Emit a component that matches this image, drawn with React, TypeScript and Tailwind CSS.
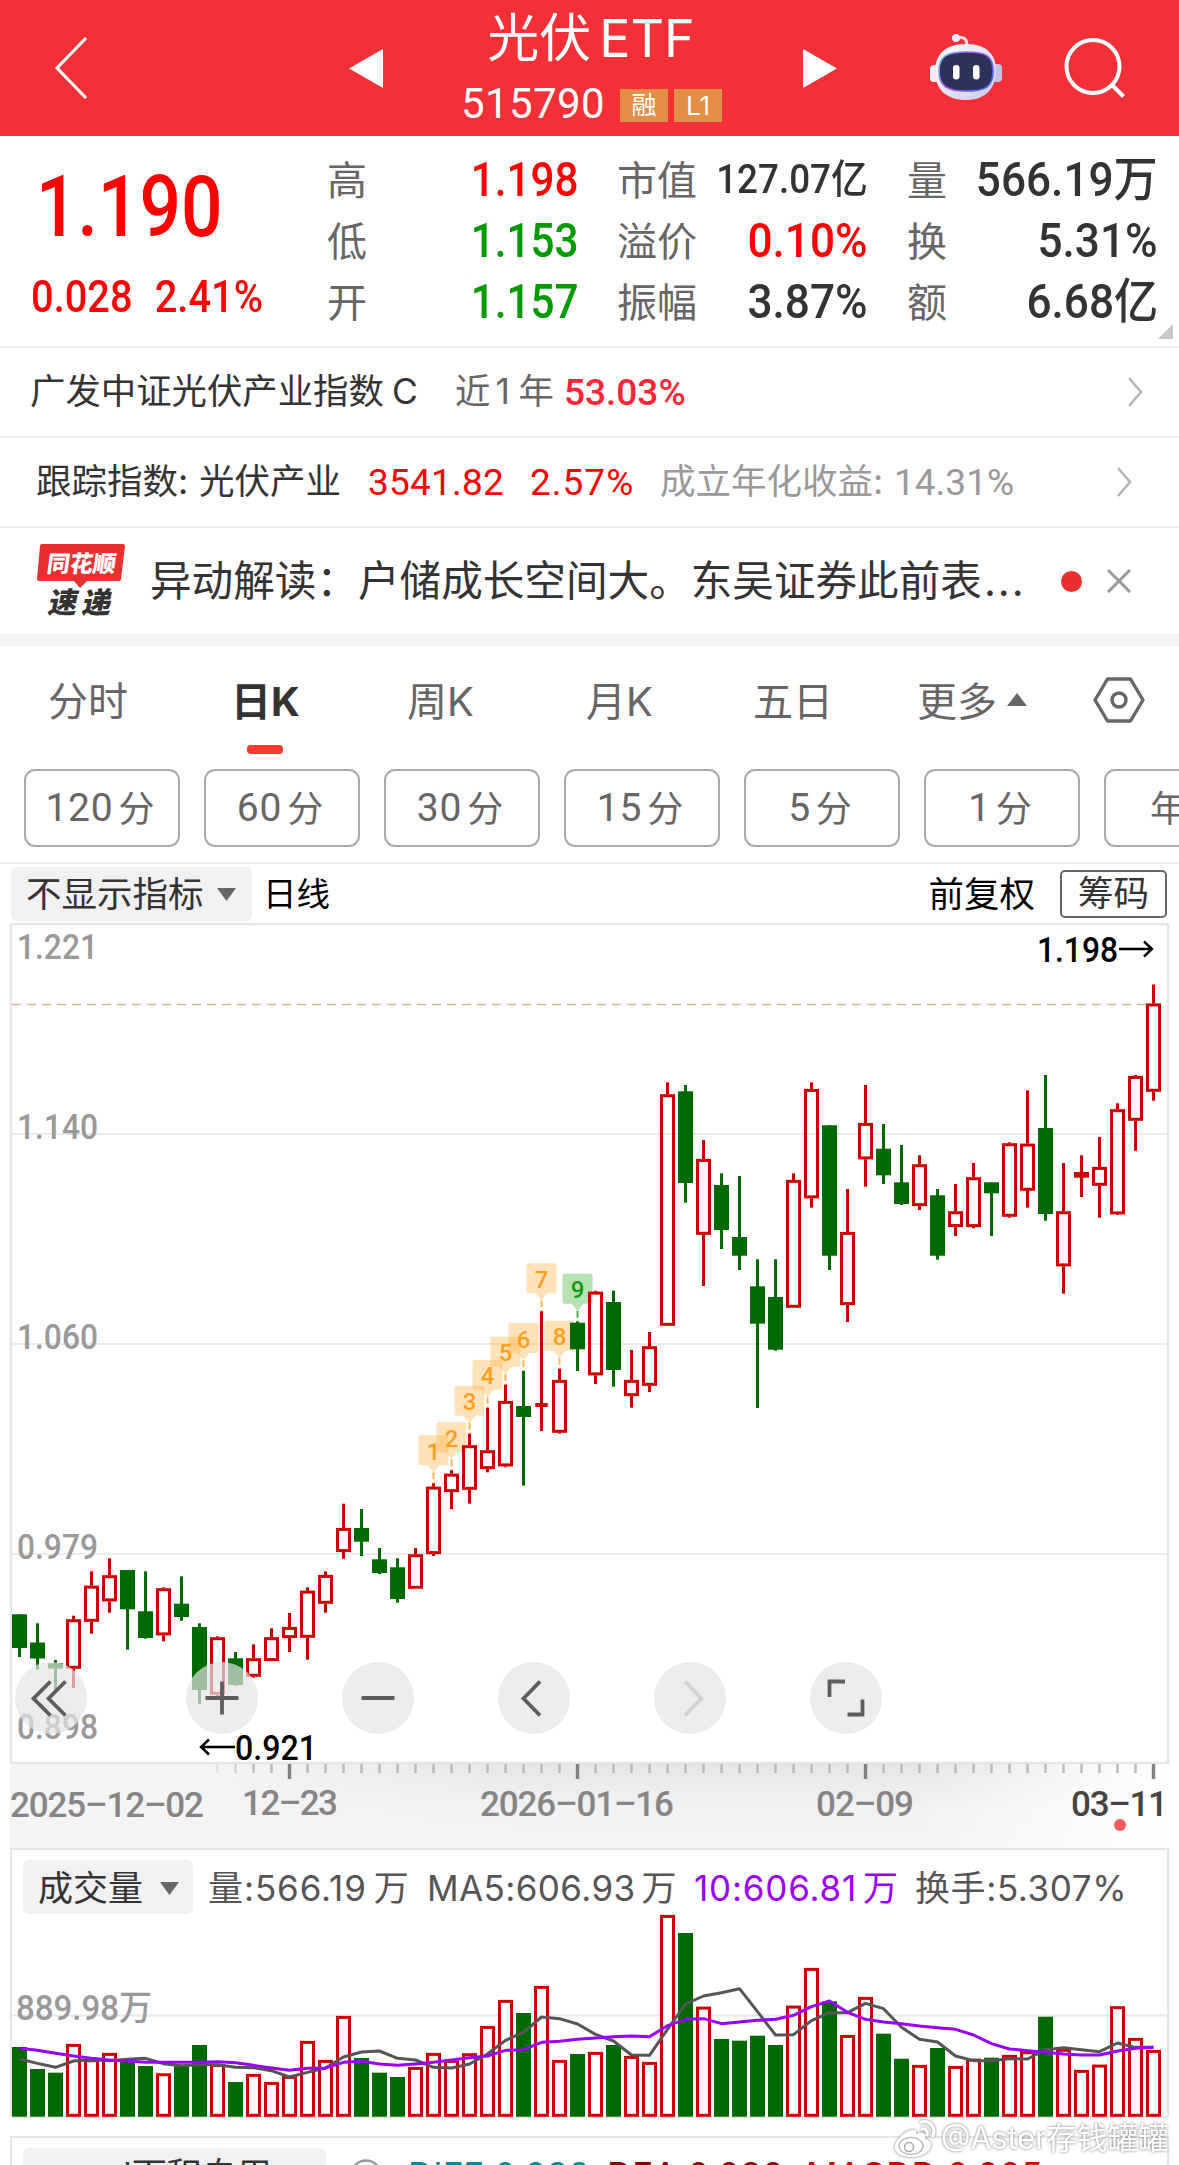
import React from 'react';

type Candle = [dir: 'r' | 'g', high: number, top: number, bottom: number, low: number];

// y values are in the drawing space of the price chart
const candles: Candle[] = [
  ['g', 1614.3, 1614.3, 1648, 1657],
  ['g', 1623.3, 1642.5, 1658.5, 1669.7],
  ['g', 1660, 1663.3, 1668.7, 1692],
  ['r', 1615.7, 1619.3, 1668.7, 1688],
  ['r', 1571.3, 1585.7, 1621.7, 1633.7],
  ['r', 1558.3, 1575.3, 1601.3, 1612.7],
  ['g', 1570, 1570, 1609.3, 1649.7],
  ['g', 1571.3, 1611.3, 1638, 1638.7],
  ['r', 1587.3, 1588.3, 1635.3, 1641.3],
  ['g', 1576.3, 1603.7, 1617, 1620.7],
  ['g', 1623.3, 1627, 1690, 1703.7],
  ['r', 1636.3, 1637.3, 1694.7, 1698.7],
  ['g', 1652, 1658.3, 1685, 1685.7],
  ['r', 1644.3, 1658.3, 1676.7, 1677.7],
  ['r', 1628.3, 1637.3, 1661, 1661],
  ['r', 1613, 1627, 1638, 1652],
  ['r', 1587.3, 1590.7, 1637.7, 1659.7],
  ['r', 1571.3, 1575, 1603.7, 1612.7],
  ['r', 1503.7, 1528, 1552, 1558.7],
  ['g', 1509, 1528, 1541.7, 1556],
  ['g', 1548, 1559.3, 1573, 1574],
  ['g', 1558.3, 1567.3, 1599, 1602.7],
  ['r', 1548, 1554.3, 1588.7, 1588.7],
  ['r', 1483.3, 1486.7, 1554, 1556],
  ['r', 1470.3, 1473.7, 1492, 1509],
  ['r', 1433.7, 1445.3, 1489.7, 1503.7],
  ['r', 1407.7, 1450.3, 1469, 1472.3],
  ['r', 1384.7, 1401, 1466.3, 1467.3],
  ['g', 1371, 1406, 1417, 1485.7],
  ['r', 1311.3, 1403, 1407, 1431],
  ['r', 1368.7, 1380, 1432.7, 1433.7],
  ['g', 1321.7, 1322.7, 1349.3, 1371],
  ['r', 1290.7, 1291.7, 1375.3, 1384],
  ['g', 1290.7, 1302, 1370, 1386.7],
  ['r', 1350, 1380, 1396, 1407.7],
  ['r', 1332, 1346.3, 1385.7, 1392],
  ['r', 1082.3, 1094.3, 1325.7, 1325.7],
  ['g', 1085, 1091.3, 1183, 1202.7],
  ['r', 1140, 1159, 1234.7, 1286],
  ['g', 1173.3, 1185, 1230, 1249],
  ['g', 1176, 1237, 1255.7, 1270],
  ['g', 1259.3, 1286.3, 1323.7, 1408],
  ['g', 1259.3, 1297, 1349.7, 1350.7],
  ['r', 1173.3, 1180, 1307.7, 1307.7],
  ['r', 1082.3, 1089, 1198.3, 1207.7],
  ['g', 1125.3, 1125.3, 1255.7, 1270],
  ['r', 1189, 1232, 1305, 1322],
  ['r', 1085, 1123, 1159.3, 1186.7],
  ['g', 1124, 1148.7, 1175.3, 1184],
  ['g', 1145, 1182.3, 1204, 1205],
  ['r', 1155.3, 1164.3, 1206, 1210],
  ['g', 1189, 1195.3, 1255.7, 1259.7],
  ['r', 1184, 1211.3, 1227, 1236],
  ['r', 1163, 1177.3, 1227, 1228.3],
  ['g', 1182.3, 1182.3, 1193.3, 1236],
  ['r', 1142.3, 1143.3, 1216.7, 1217.7],
  ['r', 1090.3, 1143.7, 1190.7, 1207.7],
  ['g', 1075, 1128, 1214, 1220.7],
  ['r', 1163, 1211.3, 1266.3, 1293.7],
  ['r', 1155.3, 1172, 1177.7, 1197],
  ['r', 1137, 1167, 1185.7, 1217.7],
  ['r', 1103.3, 1109.3, 1214.3, 1215],
  ['r', 1075, 1076, 1120.7, 1150.7],
  ['r', 984.5, 1003.5, 1091.7, 1100.7],
];

const volumeTops = [
  2047, 2069, 2072.7, 2044, 2059.3, 2053, 2060, 2066, 2073.3, 2066, 2045, 2064, 2082, 2074, 2082, 2076,
  2041, 2060, 2016, 2058, 2072.7, 2077, 2067, 2053, 2060, 2053.3, 2026, 2000, 2013, 1986, 2060, 2054,
  2052, 2045, 2056, 2062, 1915, 1933, 2006.7, 2039, 2040.7, 2035.7, 2045, 2005.7, 1968, 2001.3, 2035, 1997,
  2033.7, 2058.7, 2065, 2048, 2066, 2058.7, 2057.7, 2055, 2051.3, 2016.7, 2049, 2070, 2064.7, 2006.3, 2038, 2050,
];

// moving averages, in thirds of a pixel below the panel top
const ma5 = [
  657, 670, 682, 663, 659, 662, 658, 655, 671, 677, 674, 674, 682, 683, 692, 711, 697, 684, 651, 636, 633, 655,
  660, 682, 684, 672, 642, 601, 577, 531, 536, 552, 583, 603, 645, 646, 568, 492, 468, 458, 446, 515, 585, 584,
  542, 518, 518, 490, 506, 562, 598, 606, 648, 662, 662, 656, 657, 629, 623, 629, 635, 609, 622, 622,
];
const ma10 = [
  625, 631, 640, 648, 655, 660, 663, 667, 667, 667, 667, 665, 668, 676, 684, 691, 685, 684, 667, 664, 672, 676,
  672, 667, 660, 653, 648, 631, 629, 607, 604, 598, 594, 590, 588, 590, 557, 538, 536, 551, 546, 541, 538, 526,
  500, 483, 517, 538, 546, 551, 558, 563, 568, 585, 611, 627, 632, 637, 642, 645, 645, 633, 625, 622,
];

const RED = '#cc0000';
const GREEN = '#006a00';
const cx = (i: number) => 19.5 + 18 * i;
const maPoints = (vals: number[]) => vals.map((v, i) => `${cx(i)},${1840 + v / 3}`).join(' ');

const DIN = 'font-[Roboto,"Noto_Sans_CJK_SC",sans-serif]';

function Header() {
  return (
    <header className="flex h-[136px] items-center bg-[#f33038] text-white">
      <svg className="ml-[52px] shrink-0" width="38" height="64" viewBox="0 0 38 64" fill="none" stroke="white" strokeWidth="3.2">
        <path d="M34 2 5 32l29 30" />
      </svg>
      <svg className="ml-[259px] shrink-0" width="34" height="39" viewBox="0 0 34 39"><path d="M34 0v39L0 19.5z" fill="white" /></svg>
      <div className="flex w-[420px] shrink-0 flex-col items-center">
        <h1 className="flex h-[74px] items-center gap-[8px] pt-[3px] pr-[4px] leading-none whitespace-nowrap">
          <span className="text-[52px]">光伏</span>
          <span className="text-[52px]">ETF</span>
        </h1>
        <div className="flex h-[62px] items-start pt-[8px] pr-[3px]">
          <span className={`${DIN} text-[42px] leading-[44px] tracking-[0.4px]`}>515790</span>
          <span className="mt-[7px] ml-[15px] flex h-[33px] w-[48px] items-center justify-center bg-[#e38d47] text-[25px] leading-none">融</span>
          <span className="mt-[7px] ml-[6px] flex h-[33px] w-[48px] items-center justify-center bg-[#e38d47] text-[26px] leading-none">L1</span>
        </div>
      </div>
      <svg className="shrink-0" width="34" height="39" viewBox="0 0 34 39"><path d="M0 0v39l34-19.5z" fill="white" /></svg>
      <RobotIcon />
      <svg className="ml-[60px] shrink-0" width="62" height="64" viewBox="0 0 62 64" fill="none" stroke="white" strokeWidth="4">
        <circle cx="30" cy="30.5" r="26.5" />
        <path d="M49 49l11.5 11.5" />
      </svg>
    </header>
  );
}

function RobotIcon() {
  return (
    <svg className="ml-[92px] shrink-0" width="74" height="70" viewBox="929 33 74 70">
      <defs>
        <linearGradient id="shell" x1="0" y1="0" x2="1" y2="1">
          <stop offset="0" stopColor="#ffffff" />
          <stop offset="1" stopColor="#c9c8ea" />
        </linearGradient>
        <linearGradient id="rim" x1="0" y1="0" x2="1" y2="0.6">
          <stop offset="0" stopColor="#5fd0f5" />
          <stop offset="0.5" stopColor="#b04cf0" />
          <stop offset="1" stopColor="#4a63ee" />
        </linearGradient>
      </defs>
      <path d="M957 38c7-2 10 1 10 8" fill="none" stroke="#f2e6f4" strokeWidth="3" />
      <circle cx="956" cy="38" r="4" fill="#efe8f8" />
      <rect x="930" y="65" width="10" height="17" rx="4" fill="#eef0fb" />
      <rect x="992" y="64" width="10" height="18" rx="4" fill="#c5c4e6" />
      <path d="M966 44c21 0 30 11 30 26 0 20-12 30-30 30-19 0-31-10-31-29 0-16 10-27 31-27z" fill="url(#shell)" />
      <path d="M966 52c20 0 27 4 27 19 0 16-8 20-27 20s-27-5-27-20 8-19 27-19z" fill="#2d3358" stroke="url(#rim)" strokeWidth="1.6" />
      <rect x="953" y="65" width="6.5" height="14.5" rx="3.2" fill="white" />
      <rect x="973" y="65" width="6.5" height="14.5" rx="3.2" fill="white" />
    </svg>
  );
}

const quotes = [
  [
    { label: '高', value: '1.198', color: 'text-[#ff0000]' },
    { label: '低', value: '1.153', color: 'text-[#009900]' },
    { label: '开', value: '1.157', color: 'text-[#009900]' },
  ],
  [
    { label: '市值', value: '127.07亿', color: 'text-[#333]', small: true },
    { label: '溢价', value: '0.10%', color: 'text-[#ff0000]' },
    { label: '振幅', value: '3.87%', color: 'text-[#333]' },
  ],
  [
    { label: '量', value: '566.19万', color: 'text-[#333]' },
    { label: '换', value: '5.31%', color: 'text-[#333]' },
    { label: '额', value: '6.68亿', color: 'text-[#333]' },
  ],
];

function QuotePanel() {
  return (
    <section className="relative flex h-[212px] border-b-2 border-[#ededed]">
      <div className={`${DIN} w-[327px] shrink-0 font-medium text-[#ff0000]`}>
        <div className="mt-[28px] ml-[36px] h-[86px] origin-left scale-x-[0.85] text-[86px] leading-[86px]">1.190</div>
        <div className="mt-[24px] ml-[31px] flex h-[45px] origin-left scale-x-[0.885] gap-[25px] text-[45px] leading-[45px]">
          <span>0.028</span>
          <span>2.41%</span>
        </div>
      </div>
      {quotes.map((col, c) => (
        <div key={c} className={`flex w-[251px] flex-col pt-[13px] ${c === 0 ? '' : 'ml-[39px]'}`}>
          {col.map((q) => (
            <div key={q.label} className="flex h-[61px] items-center justify-between whitespace-nowrap">
              <span className="pt-[2px] text-[40px] leading-none text-[#666]">{q.label}</span>
              <span
                className={`${DIN} origin-right leading-none font-medium ${c === 0 ? 'scale-x-[0.88]' : 'scale-x-[0.92]'} ${q.small ? 'text-[40px]' : 'text-[48px]'} ${q.color}`}
              >
                {q.value}
              </span>
            </div>
          ))}
        </div>
      ))}
      <svg className="absolute right-[6px] bottom-[7px]" width="15" height="15" viewBox="0 0 15 15"><path d="M15 0v15H0z" fill="#c8c8c8" /></svg>
    </section>
  );
}

function Chevron({ className }: { className: string }) {
  return (
    <svg className={className} width="16" height="30" viewBox="0 0 16 30" fill="none" stroke="#b5b5b5" strokeWidth="2.6">
      <path d="M2 1l12 14L2 29" />
    </svg>
  );
}

function InfoRows() {
  return (
    <>
      <div className="flex h-[90px] items-center border-b-2 border-[#ededed] pl-[30px] text-[35.4px] leading-none whitespace-nowrap">
        <span className="w-[362px] text-[#333]">广发中证光伏产业指数</span>
        <span className="w-[63px] text-[#333]">C</span>
        <span className="flex w-[109px] gap-[5px] text-[#666]"><span>近</span><span className="w-[18px]">1</span><span>年</span></span>
        <span className={`${DIN} text-[37px] font-medium text-[#ff2436]`}>53.03%</span>
        <Chevron className="mr-[36px] ml-auto" />
      </div>
      <div className="flex h-[90px] items-center border-b-2 border-[#ededed] pl-[36px] text-[35.5px] leading-none whitespace-nowrap">
        <span className="w-[163px] text-[#333]">跟踪指数:</span>
        <span className="w-[169px] text-[#333]">光伏产业</span>
        <span className={`${DIN} w-[162px] text-[37px] tracking-[0.2px] text-[#ff0000]`}>3541.82</span>
        <span className={`${DIN} w-[130px] text-[37px] tracking-[1px] text-[#ff0000]`}>2.57%</span>
        <span className="w-[234px] text-[#999]">成立年化收益:</span>
        <span className={`${DIN} text-[37px] text-[#999]`}>14.31%</span>
        <Chevron className="mr-[47px] ml-auto" />
      </div>
      <div className="flex h-[106px] items-center pl-[36px] whitespace-nowrap">
        <svg width="92" height="78" viewBox="36 542 92 78">
          <path d="M42 544h81q2 0 2 2l-4 33q0 2-3 2H87l-7 7-6-7H39q-2 0-2-2l3-33q0-2 2-2z" fill="#ea2f30" />
          <text x="0" y="0" transform="translate(46 572) skewX(-8)" fontFamily="Noto Sans CJK SC, sans-serif" fontWeight="900" fontSize="23" fill="white">同花顺</text>
          <text x="0" y="0" transform="translate(47 613) skewX(-12)" fontFamily="Noto Sans CJK SC, sans-serif" fontWeight="900" fontSize="29" letterSpacing="5" fill="#333">速递</text>
        </svg>
        <span className="ml-[22px] pt-[2px] text-[41.6px] leading-none text-[#333]">异动解读：户储成长空间大。东吴证券此前表<span className="ml-[2px] tracking-[2px]">...</span></span>
        <span className="mr-[25px] ml-auto h-[21px] w-[21px] rounded-full bg-[#ea2f30]" />
        <svg className="mr-[48px]" width="24" height="24" viewBox="0 0 24 24" stroke="#999" strokeWidth="3"><path d="M1 1l22 22M23 1L1 23" /></svg>
      </div>
      <div className="h-[12px] bg-[#f4f4f4]" />
    </>
  );
}

const periods = [
  { num: '120', unit: '分' },
  { num: '60', unit: '分' },
  { num: '30', unit: '分' },
  { num: '15', unit: '分' },
  { num: '5', unit: '分' },
  { num: '1', unit: '分' },
  { num: '', unit: '年K' },
];

function PeriodTabs() {
  return (
    <section className="h-[218px] overflow-hidden border-b-2 border-[#ededed]">
      <nav className="flex h-[123px] items-start pt-[34px] pl-[48px] text-[40px] leading-[44px] whitespace-nowrap text-[#666]">
        <span className="w-[183px]">分时</span>
        <span className="flex w-[176px] flex-col font-bold text-[#333]">
          <span>日K</span>
          <span className="mt-[21px] ml-[16px] h-[9px] w-[36px] rounded bg-[#fd3a30]" />
        </span>
        <span className="w-[179px]">周K</span>
        <span className="w-[167px]">月K</span>
        <span className="w-[164px]">五日</span>
        <span className="w-[90px]">更多</span>
        <svg className="mt-[13px]" width="20" height="13" viewBox="0 0 20 13"><path d="M10 0l10 13H0z" fill="#666" /></svg>
        <svg className="-mt-[3px] ml-[66px]" width="52" height="46" viewBox="0 0 52 46" fill="none" stroke="#666" strokeWidth="3.4">
          <path d="M14.5 2h23L50 23 37.5 44h-23L2 23z" strokeLinejoin="round" />
          <circle cx="26" cy="23" r="7" />
        </svg>
      </nav>
      <div className="flex gap-6 pl-6">
        {periods.map((p) => (
          <button key={p.num} type="button" className="flex h-[78px] w-[156px] shrink-0 items-center justify-center gap-[5px] rounded-[11px] border-2 border-[#aaa] pr-[4px] text-[36px] leading-none text-[#666]">
            {p.num && <span className={`${DIN} text-[39px] tracking-[0.8px]`}>{p.num}</span>}
            <span className="pt-[2px]">{p.unit}</span>
          </button>
        ))}
      </div>
    </section>
  );
}

function DownArrow({ className }: { className: string }) {
  return <svg className={className} width="19" height="13" viewBox="0 0 19 13"><path d="M0 0h19L9.5 13z" fill="#666" /></svg>;
}

function ChartToolbar() {
  return (
    <div className="flex h-[59px] items-center pr-[12px] pl-[11px] text-[35.5px] leading-none whitespace-nowrap text-black">
      <span className="flex h-[54px] w-[241px] items-center rounded-[6px] bg-[#f1f1f1] pt-[2px] pl-[15px] text-[#333]">
        不显示指标<DownArrow className="ml-[13px]" />
      </span>
      <span className="ml-[11px] pt-[2px] text-[33.5px]">日线</span>
      <span className="ml-auto pt-[2px]">前复权</span>
      <span className="ml-[25px] flex h-[48px] w-[107px] items-center justify-center rounded-[5px] border-2 border-[#666] text-[#333]">筹码</span>
    </div>
  );
}

const priceLabels: [string, number][] = [
  ['1.221', 959],
  ['1.140', 1139],
  ['1.060', 1349],
  ['0.979', 1559],
  ['0.898', 1739],
];

function Signal({ n }: { n: number }) {
  const i = 22 + n;
  const x = cx(i);
  const top = candles[i][1] - 48;
  const color = n === 9 ? '#0a9a0a' : '#ff9f1c';
  return (
    <g fill={color}>
      <path
        d={`M${x - 13} ${top}h26q2 0 2 2v26q0 2-2 2h-7l-6 7-6-7h-7q-2 0-2-2v-26q0-2 2-2z`}
        fillOpacity="0.3"
      />
      <path d={`M${x} ${top + 37}v12`} stroke={color} strokeOpacity="0.75" strokeWidth="2" strokeDasharray="7 3" />
      <text x={x} y={top + 24.5} fontSize="24" fontWeight="500" textAnchor="middle">{n}</text>
    </g>
  );
}

function PriceChart() {
  return (
    <svg className="block" width="1179" height="841" viewBox="0 923 1179 841" fontFamily="Roboto, sans-serif">
      <rect x="11" y="924" width="1157" height="839" fill="white" stroke="#e6e6e6" strokeWidth="2.5" />
      {[1134, 1344, 1554].map((y) => <path key={y} d={`M12 ${y}h1155`} stroke="#ececec" strokeWidth="2" />)}
      <path d="M12 1004.5h1155" stroke="#d3b68c" strokeWidth="1.5" strokeDasharray="9 6" />
      {priceLabels.map(([label, y]) => (
        <text key={label} x="17" y={y} fontSize="35" fontWeight="500" fill="#999" textLength="81" lengthAdjust="spacingAndGlyphs">{label}</text>
      ))}
      {[1, 2, 3, 4, 5, 6, 7, 8, 9].map((n) => <Signal key={n} n={n} />)}
      {candles.map(([dir, high, top, bottom, low], i) => {
        const color = dir === 'r' ? RED : GREEN;
        const x = cx(i);
        if (dir === 'g' || bottom - top < 7) {
          const half = i === 29 ? 6.2 : 7.5;
          return (
            <g key={i} fill={color}>
              <rect x={x - 1.5} y={high} width="3" height={low - high} />
              <rect x={x - half} y={top} width={half * 2} height={bottom - top} />
            </g>
          );
        }
        return (
          <g key={i} fill={color}>
            <rect x={x - 1.5} y={high} width="3" height={top - high} />
            <rect x={x - 1.5} y={bottom} width="3" height={low - bottom} />
            <rect x={x - 6} y={top + 1.4} width="12" height={bottom - top - 2.8} fill="none" stroke={color} strokeWidth="3" />
          </g>
        );
      })}
      <g fontSize="35" fontWeight="500" fill="black">
        <text x="1037" y="962" textLength="81" lengthAdjust="spacingAndGlyphs">1.198</text>
        <text x="235" y="1760" textLength="82" lengthAdjust="spacingAndGlyphs">0.921</text>
      </g>
      <g fill="none" stroke="black" strokeWidth="2.4">
        <path d="M1119 949h33M1144 941.5l8 7.5-8 7.5" />
        <path d="M235 1747h-34M209 1739.5l-8 7.5 8 7.5" />
      </g>
    </svg>
  );
}

const controls: { left: string; d: string; faded?: boolean }[] = [
  { left: 'left-[15px]', d: 'M35.5 19.5 18.5 36.5l17 17M50.5 19.5 33.5 36.5l17 17' },
  { left: 'left-[186px]', d: 'M19.5 36h33M36 19.5v33' },
  { left: 'left-[342px]', d: 'M19.5 36h33' },
  { left: 'left-[498px]', d: 'M42 19.5 25.5 36.5 42 53.5' },
  { left: 'left-[654px]', d: 'M31 19.5 47.5 36.5 31 53.5', faded: true },
  { left: 'left-[810px]', d: 'M19.5 35V19.5H35M37.5 52.5H52.5V37.5' },
];

function ChartControls() {
  return (
    <>
      {controls.map((c) => (
        <button key={c.left} type="button" className={`absolute top-[739px] h-[72px] w-[72px] rounded-full bg-[#e4e4e4]/70 ${c.left}`}>
          <svg width="72" height="72" viewBox="0 0 72 72" fill="none" stroke={c.faded ? '#d2d2d2' : '#5c5c5c'} strokeWidth="3.8">
            <path d={c.d} />
          </svg>
        </button>
      ))}
    </>
  );
}

const dates = [
  { text: '2025-12-02', x: 10, y: 1817, w: 194 },
  { text: '12-23', x: 242, y: 1815, w: 96 },
  { text: '2026-01-16', x: 480, y: 1816, w: 194 },
  { text: '02-09', x: 816, y: 1816, w: 98 },
  { text: '03-11', x: 1071, y: 1816, w: 97, active: true },
];

function TimeAxis() {
  return (
    <svg className="block" width="1179" height="84" viewBox="0 1764 1179 84" fontFamily="Roboto, sans-serif">
      <defs>
        <linearGradient id="axisY" x1="0" y1="0" x2="0" y2="1">
          <stop offset="0" stopColor="#e6e6e6" />
          <stop offset="0.55" stopColor="#f2f2f2" />
          <stop offset="1" stopColor="#f4f4f4" />
        </linearGradient>
        <linearGradient id="axisLeft">
          <stop offset="0" stopColor="#f4f4f4" />
          <stop offset="1" stopColor="#f4f4f4" stopOpacity="0" />
        </linearGradient>
        <linearGradient id="axisRight">
          <stop offset="0" stopColor="white" stopOpacity="0" />
          <stop offset="1" stopColor="white" />
        </linearGradient>
      </defs>
      <rect x="10" y="1764" width="1159" height="84" fill="url(#axisY)" />
      <rect x="10" y="1764" width="190" height="84" fill="#f4f4f4" />
      <rect x="200" y="1764" width="330" height="84" fill="url(#axisLeft)" />
      <rect x="920" y="1764" width="249" height="84" fill="url(#axisRight)" />
      {candles.map((_, i) => {
        if (i < 11) return null;
        const major = i % 16 === 15;
        return (
          <path key={i} d={`M${cx(i)} 1764v${major ? 15 : 9}`} stroke={major ? '#808080' : '#b8b8b8'}
            strokeWidth={major ? 3.4 : 2.4} opacity={i < 14 ? (i - 10) * 0.3 : 1} />
        );
      })}
      {dates.map((d) => (
        <text key={d.text} x={d.x} y={d.y} fontSize="35" fontWeight="500" fill={d.active ? '#444' : '#858585'} textLength={d.w}>
          {d.text.replace(/-/g, '–')}
        </text>
      ))}
      <circle cx="1120" cy="1825" r="6" fill="#f45b5b" />
    </svg>
  );
}

function VolumePanel() {
  return (
    <section className="mx-[10px] h-[269px] border-2 border-b-0 border-[#e6e6e6]">
      <div className="mt-[10px] flex h-[54px] items-center pl-[11px] text-[35px] leading-none whitespace-nowrap text-[#555]">
        <span className="flex h-[54px] w-[170px] items-center rounded-[6px] bg-[#f1f1f1] pt-[2px] pl-[15px] text-[#333]">
          成交量<DownArrow className="ml-[17px]" />
        </span>
        <span className="ml-[15px] w-[219px] pt-[2px] tracking-[0.9px]">量:566.19<span className="ml-[7px]">万</span></span>
        <span className="w-[267px] pt-[2px] tracking-[0.4px]">MA5:606.93<span className="ml-[6px]">万</span></span>
        <span className="w-[221px] pt-[2px] tracking-[0.8px] text-[#9900ff]">10:606.81<span className="ml-[6px]">万</span></span>
        <span className="pt-[2px] tracking-[0.6px]">换手:5.307%</span>
      </div>
      <svg className="-ml-[12px] block" width="1179" height="204" viewBox="0 1914 1179 204">
        <path d="M12 2015.5h1155M12 2117h1155" stroke="#e8e8e8" strokeWidth="2" />
        <text x="16" y="2020" fontFamily="Roboto, Noto Sans CJK SC, sans-serif" fontSize="35.5" fontWeight="500" fill="#999" textLength="136" lengthAdjust="spacingAndGlyphs">889.98万</text>
        {volumeTops.map((top, i) => candles[i][0] === 'g' ? (
          <rect key={i} x={cx(i) - 7.5} y={top} width="15" height={2116.7 - top} fill={GREEN} />
        ) : (
          <rect key={i} x={cx(i) - 6} y={top + 1.4} width="12" height={2113.9 - top} fill="white" stroke={RED} strokeWidth="3" />
        ))}
        <polyline points={maPoints(ma5)} fill="none" stroke="#555" strokeWidth="3" strokeLinejoin="round" />
        <polyline points={maPoints(ma10)} fill="none" stroke="#9900ff" strokeWidth="3" strokeLinejoin="round" />
      </svg>
    </section>
  );
}

function MacdPanel() {
  return (
    <section className="mx-[10px] mt-[19px] h-[29px] overflow-hidden border-2 border-b-0 border-[#e6e6e6]">
      <div className="mt-[10px] flex h-[54px] items-center pl-[11px] text-[35px] leading-none whitespace-nowrap">
        <span className="flex h-[54px] w-[303px] items-center rounded-[6px] bg-[#f1f1f1] pl-[17px] text-[#333]">macd面积自用</span>
        <svg className="ml-[24px]" width="32" height="36" viewBox="0 0 32 36" fill="none" stroke="#999" strokeWidth="2.5"><circle cx="16" cy="18" r="14.5" /></svg>
        <span className="ml-[26px] w-[199px] text-[#0c8a8f]">DIFF:0.038</span>
        <span className="w-[199px] text-[#8b0000]">DEA:0.036</span>
        <span className="text-[#cc0000]">MACDD:0.005</span>
      </div>
    </section>
  );
}

function Watermark() {
  return (
    <div className="absolute top-[2113px] left-[893px] flex items-center whitespace-nowrap text-white [filter:drop-shadow(0_0_1.5px_#777)]">
      <svg width="44" height="44" viewBox="0 0 44 44" fill="none">
        <path d="M18 14c-7 2-17 11-16 18 1 7 9 9 17 9 11 0 19-6 19-12 0-4-3-5-6-6 2-5-2-8-9-5 1-4-1-5-5-4z" fill="white" />
        <ellipse cx="18" cy="30" rx="12" ry="8.5" stroke="#bbb" strokeWidth="1.5" />
        <circle cx="16" cy="31" r="4.5" stroke="#aaa" strokeWidth="1.5" />
        <path d="M28 6c9-2 15 5 12 14M29 13c4-1 6 2 5 6" stroke="white" strokeWidth="3" strokeLinecap="round" />
      </svg>
      <span className="ml-[4px] text-[30.5px] leading-[50px]">@Aster存钱罐罐</span>
    </div>
  );
}

export default function App() {
  return (
    <main className="relative h-[2165px] w-[1179px] overflow-hidden bg-white font-[Inter,'Noto_Sans_CJK_SC',sans-serif]">
      <Header />
      <QuotePanel />
      <InfoRows />
      <PeriodTabs />
      <ChartToolbar />
      <div className="relative">
        <PriceChart />
        <ChartControls />
      </div>
      <TimeAxis />
      <VolumePanel />
      <MacdPanel />
      <Watermark />
    </main>
  );
}
